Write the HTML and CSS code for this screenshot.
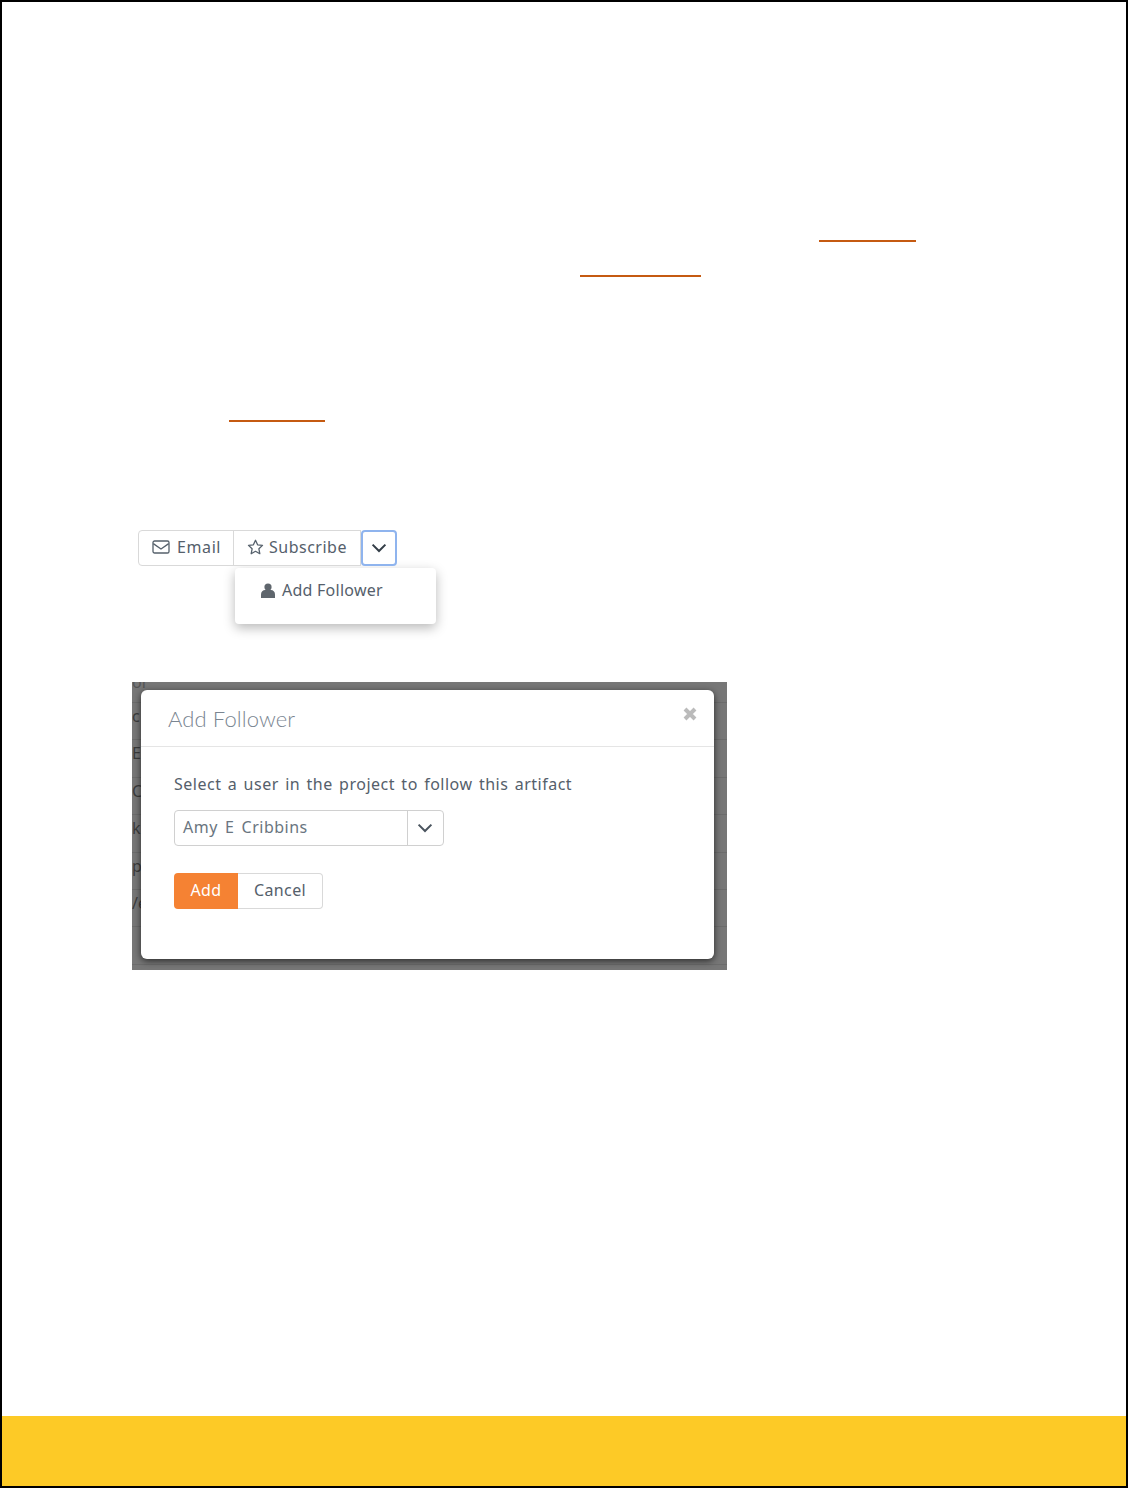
FILE: index.html
```html
<!DOCTYPE html>
<html lang="en">
<head>
<meta charset="utf-8">
<title>Add Follower</title>
<link rel="stylesheet" href="styles.css">
</head>
<body>
<div class="page">
  <main class="content">
    <div class="rule rule-a"></div>
    <div class="rule rule-b"></div>
    <div class="rule rule-c"></div>

    <section class="shot-toolbar">
      <div class="btn-group">
        <button class="btn btn-email">
          <svg class="icon" width="18" height="14" viewBox="0 0 18 14"><rect x="1" y="1" width="16" height="12" rx="1.6" fill="none" stroke="#55606b" stroke-width="1.3"/><path d="M1.3 3.6 9 9l7.7-5.4" fill="none" stroke="#55606b" stroke-width="1.3"/></svg>
          <span>Email</span>
        </button>
        <button class="btn btn-sub">
          <svg class="icon" width="17" height="16" viewBox="0 0 17 16"><path d="M8.5 1.3l2.1 4.5 4.9.6-3.6 3.4.9 4.9-4.3-2.4-4.3 2.4.9-4.9L1.5 6.4l4.9-.6z" fill="none" stroke="#55606b" stroke-width="1.3" stroke-linejoin="round"/></svg>
          <span>Subscribe</span>
        </button>
        <button class="btn btn-caret" aria-label="More">
          <svg width="16" height="10" viewBox="0 0 16 10"><path d="M1.6 1.6 8 8l6.400-6.400" fill="none" stroke="#333d47" stroke-width="2"/></svg>
        </button>
      </div>
      <div class="menu">
        <div class="menu-item">
          <svg width="14" height="15" viewBox="0 0 14 15"><circle cx="7" cy="4" r="3.6" fill="#5f666d"/><path d="M0 15v-3.600C0 8.600 2 7 4 7h6c2 0 4 1.600 4 4.400V15z" fill="#5f666d"/></svg>
          <span>Add Follower</span>
        </div>
      </div>
    </section>

    <section class="shot-modal">
      <div class="backdrop">
        <div class="bd-row bd-first">or</div>
        <div class="bd-row">c</div>
        <div class="bd-row">E</div>
        <div class="bd-row">C</div>
        <div class="bd-row">k</div>
        <div class="bd-row">p</div>
        <div class="bd-row">/e</div>
        <div class="bd-row"></div>
      </div>
      <div class="modal">
        <header class="modal-head">
          <h2>Add Follower</h2>
          <svg class="close" width="14" height="14" viewBox="0 0 14 14"><path d="M2 2l10 10M12 2 2 12" stroke="#bbb" stroke-width="4"/></svg>
        </header>
        <div class="modal-body">
          <p>Select a user in the project to follow this artifact</p>
          <div class="select">
            <span class="select-value">Amy E Cribbins</span>
            <span class="select-caret">
              <svg width="16" height="10" viewBox="0 0 16 10"><path d="M1.600 1.600 8 8l6.400-6.400" fill="none" stroke="#4a545e" stroke-width="2"/></svg>
            </span>
          </div>
          <div class="actions">
            <button class="act act-add">Add</button>
            <button class="act act-cancel">Cancel</button>
          </div>
        </div>
      </div>
    </section>
  </main>
  <footer class="footer"></footer>
</div>
</body>
</html>
```
FILE: styles.css
```css
* { box-sizing: border-box; }
html, body { margin: 0; padding: 0; background: #fff; }
body { font-family: "Noto Sans", "Open Sans", sans-serif; color: #55606b; }

.page {
  width: 1128px;
  height: 1488px;
  border: 2px solid #000;
  display: flex;
  flex-direction: column;
}
.content { flex: 1; position: relative; }
.footer { height: 70px; background: #fdca26; }

.rule { height: 2px; background: #c55a11; }
.rule-a { width: 97px; margin: 238px 0 0 817px; }
.rule-b { width: 121px; margin: 33px 0 0 578px; }
.rule-c { width: 96px; margin: 143px 0 0 227px; }

.shot-toolbar { margin: 108px 0 0 136px; }
.btn-group { display: flex; height: 36px; width: 259px; }
.btn {
  display: flex;
  align-items: center;
  gap: 6px;
  height: 36px;
  padding: 0 0 2px;
  background: #fff;
  border: 1px solid #d9d9d9;
  font: 16px/20px "Noto Sans", sans-serif;
  letter-spacing: .5px;
  color: #55606b;
}
.btn-email { width: 96px; padding-left: 13px; border-radius: 4px 0 0 4px; gap: 7px; letter-spacing: .6px; }
.btn-sub { width: 128px; margin-left: -1px; padding-left: 13px; gap: 5px; }
.btn-caret {
  width: 36px;
  padding: 0;
  justify-content: center;
  border: 2px solid #8fb4ee;
  border-radius: 4px;
}
.menu {
  width: 201px;
  height: 56px;
  margin: 2px 0 0 97px;
  background: #fff;
  border-radius: 4px;
  box-shadow: 0 4px 12px rgba(0,0,0,.28);
  padding: 12px 0 0 26px;
}
.menu-item { display: flex; align-items: center; gap: 7px; font-size: 16px; line-height: 20px; letter-spacing: .25px; }

.shot-modal {
  position: relative;
  width: 595px;
  height: 288px;
  margin: 58px 0 0 130px;
  overflow: hidden;
  background: #777;
}
.bd-row {
  height: 37.4px;
  border-bottom: 1px solid #6c6c6c;
  color: #3c3c3c;
  font-size: 16px;
  line-height: 26px;
}
.bd-first { height: 21px; line-height: 0; color: #555; }
.modal {
  position: absolute;
  left: 9px;
  top: 8px;
  width: 573px;
  height: 269px;
  background: #fff;
  border-radius: 6px;
  box-shadow: 0 2px 7px rgba(0,0,0,.65);
}
.modal-head {
  position: relative;
  height: 57px;
  border-bottom: 1px solid #e5e5e5;
  padding: 13px 0 0 27px;
}
.modal-head h2 {
  margin: 0;
  font: 300 22px/32px "Lato", sans-serif;
  letter-spacing: .1px;
  color: #7a8591;
}
.close { position: absolute; right: 17px; top: 17px; }
.modal-body { padding: 26px 0 0 33px; }
.modal-body p { margin: 0; font-size: 16px; line-height: 22px; letter-spacing: .5px; word-spacing: 1.700px; color: #55606b; }
.select {
  display: flex;
  width: 270px;
  height: 36px;
  margin-top: 15px;
  border: 1px solid #d0d0d0;
  border-radius: 4px;
  font-size: 16px;
  line-height: 33px;
  letter-spacing: .5px;
  word-spacing: 2.500px;
  color: #6a7580;
}
.select-value { flex: 1; padding-left: 8px; border-right: 1px solid #d0d0d0; }
.select-caret { width: 35px; padding-right: 2px; display: flex; align-items: center; justify-content: center; }
.actions { display: flex; margin-top: 27px; }
.act { height: 36px; padding: 0 0 2px; font: 16px/20px "Noto Sans", sans-serif; letter-spacing: .4px; }
.act-add {
  width: 64px;
  background: #f58233;
  color: #fff;
  border: 0;
  border-radius: 4px 0 0 4px;
}
.act-cancel {
  width: 85px;
  background: #fff;
  color: #55606b;
  border: 1px solid #d9d9d9;
  border-left: 0;
  border-radius: 0 4px 4px 0;
}
```
